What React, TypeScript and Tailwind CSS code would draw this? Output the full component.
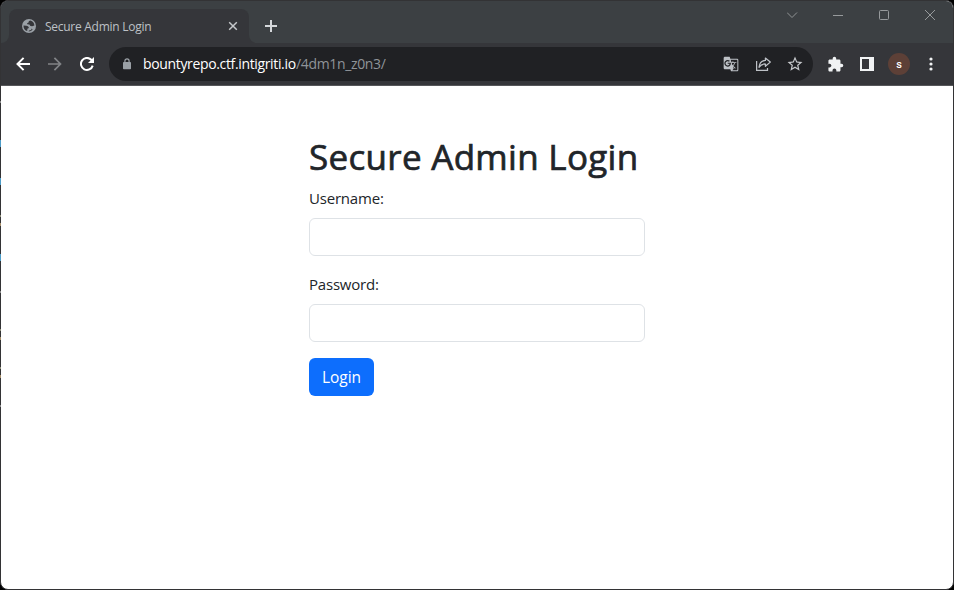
import React from "react";
import { MdStarBorder, MdExtension, MdGTranslate } from "react-icons/md";

const EDGE_MARKS = [
  { top: 101, height: 2, color: "#8a8a8a" },
  { top: 140, height: 7, color: "#4c9cc8" },
  { top: 178, height: 7, color: "#4c9cc8" },
  { top: 215, height: 2, color: "#8d8d78" },
  { top: 223, height: 3, color: "#a58d69" },
  { top: 254, height: 7, color: "#4c9cc8" },
  { top: 291, height: 2, color: "#8a8a8a" },
  { top: 329, height: 2, color: "#8d8d78" },
  { top: 337, height: 3, color: "#a58d69" },
  { top: 367, height: 2, color: "#8d8d78" },
  { top: 375, height: 3, color: "#a58d69" },
  { top: 405, height: 2, color: "#8a8a8a" },
];

function Globe() {
  return (
    <svg className="h-[14px] w-[14px] shrink-0" viewBox="0 0 14 14">
      <circle cx="7" cy="7" r="7" fill="#9aa0a6" />
      <path
        d="M8.4 1.6 C7.2 2 6.4 2.7 6.4 3.7 L5.2 4 L5.2 5.2 L7.4 5.6 L8.4 7 L10.2 7.2 L12.4 6.6 C12.3 4.2 10.8 2.3 8.4 1.6Z M1.5 6.4 L4.4 6.8 C5.8 7 6.9 7.9 6.9 9 L5.4 9.7 L5.2 12.1 C3 11.4 1.3 9.3 1.5 6.4Z M6.6 12.5 L7 11.4 L9 11 L9.8 9.6 L10.6 10.6 C9.6 11.9 8.2 12.6 6.6 12.5Z"
        fill="#35363a"
      />
    </svg>
  );
}

function TabStrip() {
  return (
    <div className="flex h-[42px] shrink-0 items-stretch bg-[#3c4043]">
      <div className="flex w-2 items-end bg-[#35363a]">
        <div className="h-full w-full rounded-br-lg bg-[#3c4043]" />
      </div>
      <div className="mt-2 flex w-60 items-center rounded-t-lg bg-[#35363a] pl-[13px] pr-[11px]">
        <Globe />
        <span className="ml-[9px] mt-px flex-1 whitespace-nowrap text-[12px] leading-4 tracking-[-0.27px] text-[#bdc1c6]">Secure Admin Login</span>
        <svg className="h-[10px] w-[10px]" viewBox="0 0 10 10" stroke="#c5c8cb" strokeWidth="1.5">
          <path d="M1.2 1.2 8.8 8.8M8.8 1.2 1.2 8.8" />
        </svg>
      </div>
      <div className="flex w-2 items-end bg-[#35363a]">
        <div className="h-full w-full rounded-bl-lg bg-[#3c4043]" />
      </div>
      <svg className="ml-[7px] mt-[18px] h-[14px] w-[14px]" viewBox="0 0 14 14" stroke="#d5d8db" strokeWidth="2">
        <path d="M7 1v12M1 7h12" />
      </svg>
      <div className="ml-auto flex h-[29px] items-center gap-[35px] pr-[17px]">
        <svg className="h-[11px] w-[11px]" viewBox="0 0 11 11" fill="none" stroke="#8f9294">
          <path d="M0 2.5 5 7.5 10 2.5" />
        </svg>
        <svg className="h-[11px] w-[11px]" viewBox="0 0 11 11" stroke="#979a9c">
          <path d="M0 5.5h10" />
        </svg>
        <svg className="h-[11px] w-[11px]" viewBox="0 0 11 11" fill="none" stroke="#979a9c">
          <rect x=".5" y=".5" width="9" height="9" rx="1" />
        </svg>
        <svg className="h-[11px] w-[11px]" viewBox="0 0 11 11" stroke="#979a9c">
          <path d="M0 0l10 10M10 0l-10 10" />
        </svg>
      </div>
    </div>
  );
}

function Toolbar() {
  return (
    <div className="flex h-[43px] shrink-0 items-center border-b border-[#56575a] bg-[#35363a] pl-[15px]">
      <svg className="h-[14px] w-[14px] shrink-0" viewBox="0 0 14 14" fill="none" stroke="#fff" strokeWidth="2">
        <path d="M14 7H2M7.6 .9 1.5 7l6.1 6.1" />
      </svg>
      <svg className="ml-[18px] h-[14px] w-[14px] shrink-0" viewBox="0 0 14 14" fill="none" stroke="#828487" strokeWidth="1.7">
        <path d="M0 7h12M6.4 .9 12.5 7l-6.1 6.1" />
      </svg>
      <svg className="ml-[18px] h-[14px] w-[14px] shrink-0" viewBox="0 0 14 14" fill="none" stroke="#fff" strokeWidth="2">
        <path d="M12.7 8.6A6 6 0 1 1 11.3 2.8L12.6 4.1" />
        <path d="M14 0v6H8Z" fill="#fff" stroke="none" />
      </svg>
      <div className="ml-[15px] flex h-[34px] w-[704px] shrink-0 items-center rounded-full bg-[#202124] pl-[14px] pr-[9px]">
        <svg className="h-3 w-2 shrink-0" viewBox="0 0 8 12">
          <path d="M1.9 5V3a2.1 2.1 0 0 1 4.2 0v2" fill="none" stroke="#9aa0a6" strokeWidth="1.2" />
          <rect y="4" width="8" height="7.3" rx=".8" fill="#9aa0a6" />
        </svg>
        <div className="ml-3 flex flex-1 whitespace-nowrap text-[14px] leading-5 text-[#8f9499]">
          <span className="w-[153px] tracking-[-0.35px] text-white">bountyrepo.ctf.intigriti.io</span>
          <span className="tracking-[-0.35px]">/4dm1n_z0n3/</span>
        </div>
        <MdGTranslate className="h-4 w-4 text-[#bdc1c6]" />
        <svg className="ml-4 h-4 w-4" viewBox="0 0 16 16" fill="none" stroke="#bdc1c6" strokeWidth="1.25">
          <path d="M1.6 5v9.4h10.9V12" />
          <path d="M10.4 2.1 15.3 6.1 10.4 10.3V8C7.4 7.9 5.4 9.1 4 11.3 4.4 7.4 6.7 4.7 10.4 4.4Z" strokeLinejoin="round" />
        </svg>
        <MdStarBorder className="ml-[15px] h-[18px] w-[18px] text-[#c5c8cb]" />
      </div>
      <MdExtension className="ml-[14px] h-[17px] w-[17px] shrink-0 text-[#f1f3f4]" />
      <svg className="ml-4 h-[14px] w-[14px] shrink-0" viewBox="0 0 14 14">
        <path d="M0 0h14v14H0zM2 2v10h7V2z" fill="#f1f3f4" fillRule="evenodd" />
      </svg>
      <div className="ml-[14px] flex h-[22px] w-[22px] shrink-0 items-center justify-center rounded-full bg-[#5d4037] font-['Roboto',sans-serif] text-[11px] font-medium leading-none text-white">s</div>
      <svg className="ml-[19px] h-[14px] w-[4px] shrink-0" viewBox="0 0 4 14" fill="#f1f3f4">
        <circle cx="2" cy="2" r="1.6" />
        <circle cx="2" cy="7" r="1.6" />
        <circle cx="2" cy="12" r="1.6" />
      </svg>
    </div>
  );
}

export default function App() {
  return (
    <div className="relative h-[590px] w-[954px] overflow-hidden bg-black font-['Open_Sans','Noto_Sans',sans-serif]">
      <div className="flex h-full flex-col overflow-hidden rounded-lg border border-[#333335] bg-white">
        <TabStrip />
        <Toolbar />
        <main className="ml-[308px] w-[336px] pt-[49px] text-[#212529]">
          <h1 className="mb-[7px] whitespace-nowrap text-[35px] leading-[44px] tracking-[0.3px] [-webkit-text-stroke:0.7px_#212529]">Secure Admin Login</h1>
          <form onSubmit={(e) => e.preventDefault()}>
            <label htmlFor="username" className="mb-2 block text-[15px] leading-6 tracking-[-0.2px]">Username:</label>
            <input id="username" className="mb-4 block h-[38px] w-full rounded-md border border-[#dee2e6] px-3 outline-none" />
            <label htmlFor="password" className="mb-2 block text-[15px] leading-6 tracking-[-0.2px]">Password:</label>
            <input id="password" type="password" className="mb-4 block h-[38px] w-full rounded-md border border-[#dee2e6] px-3 outline-none" />
            <button className="block h-[38px] w-[65px] rounded-md bg-[#0d6efd] text-[15.5px] leading-6 text-white">Login</button>
          </form>
        </main>
      </div>
      {EDGE_MARKS.map((m) => (
        <div key={m.top} className="absolute left-0 w-px" style={{ top: m.top, height: m.height, background: m.color }} />
      ))}
    </div>
  );
}
